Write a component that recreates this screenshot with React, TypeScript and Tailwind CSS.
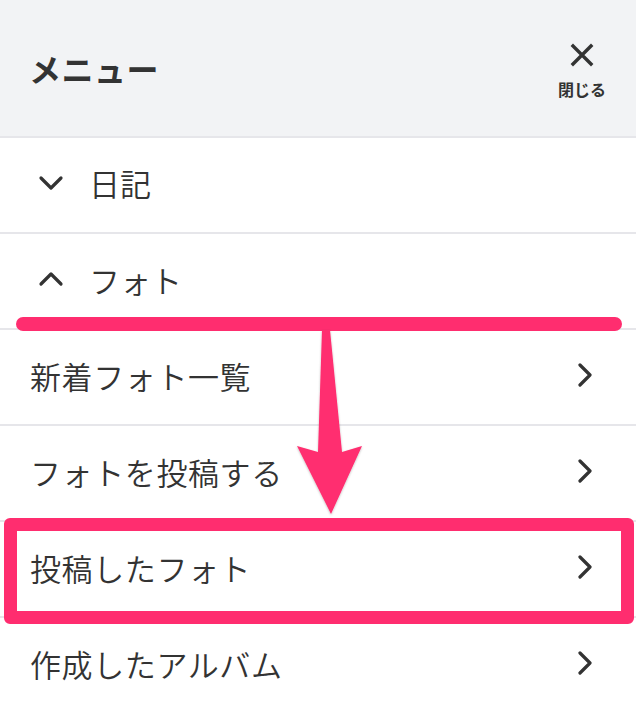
import React from 'react';

const font = { fontFamily: '"Noto Sans CJK JP", "Noto Sans", sans-serif' };

function ChevronRight() {
  return (
    <svg width="16" height="24" viewBox="0 0 16 24" fill="none" className="shrink-0">
      <polyline points="3,2 13,12 3,22" stroke="#333" strokeWidth="3.2" strokeLinecap="round" strokeLinejoin="round" />
    </svg>
  );
}

function ChevronToggle({ open }: { open: boolean }) {
  return (
    <svg width="26" height="16" viewBox="0 0 26 16" fill="none" className="shrink-0">
      <polyline
        points={open ? '3,13 13,3 23,13' : '3,3 13,13 23,3'}
        stroke="#333"
        strokeWidth="3.2"
        strokeLinecap="round"
        strokeLinejoin="round"
      />
    </svg>
  );
}

const subItems = ['新着フォト一覧', 'フォトを投稿する', '投稿したフォト', '作成したアルバム'];

export default function App() {
  return (
    <div className="relative w-[636px] h-[712px] overflow-hidden bg-white text-[#333]" style={font}>
      {/* Header */}
      <div className="flex h-[138px] items-center justify-between border-b-2 border-[#e6e6ea] bg-[#f2f3f5] pl-[29px] pr-[30px]">
        <h1 className="text-[32px] font-bold tracking-[0.5px]">メニュー</h1>
        <button className="flex flex-col items-center pt-[4px] text-[#333]">
          <svg width="24" height="24" viewBox="0 0 24 24" fill="none">
            <path d="M3 3 L21 21 M21 3 L3 21" stroke="#333" strokeWidth="3.4" strokeLinecap="square" />
          </svg>
          <span className="mt-[14px] text-[16px] font-bold leading-none">閉じる</span>
        </button>
      </div>

      {/* Accordion sections */}
      <div className="flex h-[96px] items-center gap-[25px] border-b-2 border-[#e6e6ea] pb-[5px] pl-[38px]">
        <ChevronToggle open={false} />
        <span className="text-[31px] font-[350] leading-none">日記</span>
      </div>
      <div className="flex h-[96px] items-center gap-[25px] border-b-2 border-[#e6e6ea] pb-[4px] pl-[38px]">
        <ChevronToggle open />
        <span className="text-[31px] font-[350] leading-none">フォト</span>
      </div>

      {subItems.map((label) => (
        <div key={label} className="flex h-[96px] items-center justify-between border-b-2 border-[#e6e6ea] pb-[4px] pl-[30px] pr-[43px]">
          <span className="text-[31px] font-[350] leading-none tracking-[0.6px]">{label}</span>
          <ChevronRight />
        </div>
      ))}

      {/* Annotations */}
      <div className="absolute left-[16px] top-[317px] h-[14px] w-[606px] rounded-full bg-[#ff2d6f]" />
      <svg className="absolute left-0 top-0 pointer-events-none" width="636" height="712" viewBox="0 0 636 712">
        <defs>
          <filter id="sh" x="-20%" y="-20%" width="140%" height="140%">
            <feDropShadow dx="0" dy="1" stdDeviation="1" floodColor="#000" floodOpacity="0.25" />
          </filter>
        </defs>
        <polygon
          points="322,330 330,330 342,452 362,446 331,514 297,446 318,452"
          fill="#ff2d6f"
          filter="url(#sh)"
        />
      </svg>
      <div className="absolute left-[4px] top-[518px] h-[106px] w-[630px] rounded-[6px] border-[13px] border-[#ff2d6f]" />
    </div>
  );
}
